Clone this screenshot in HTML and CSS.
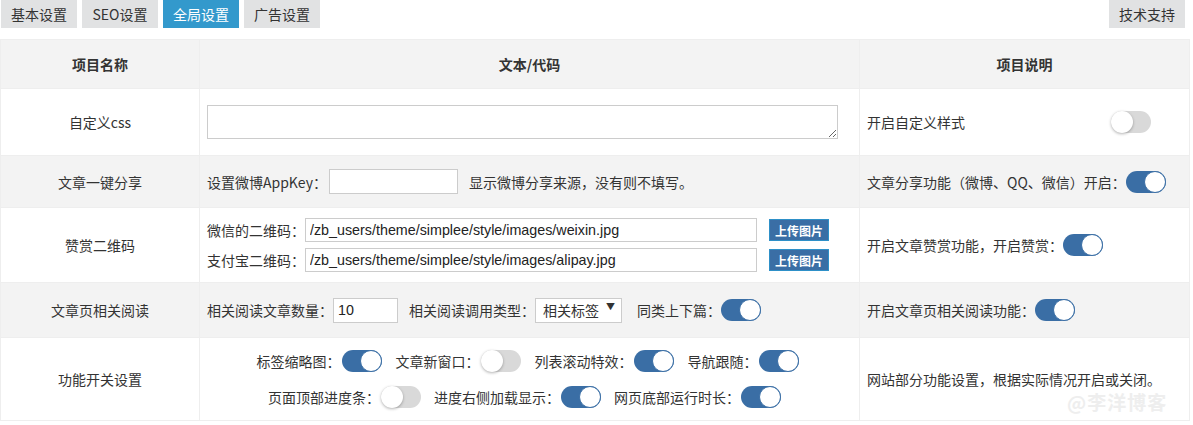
FILE: index.html
```html
<!DOCTYPE html>
<html lang="zh-CN">
<head>
    <meta charset="UTF-8">
    <title>全局设置</title>
    <link rel="stylesheet" href="styles.css">
</head>
<body>
<div class="tabs">
    <div class="tab_list">
        <span class="tab">基本设置</span>
        <span class="tab">SEO设置</span>
        <span class="tab tab_active">全局设置</span>
        <span class="tab">广告设置</span>
    </div>
    <span class="tab">技术支持</span>
</div>

<table class="einstellungen">
    <tr class="kopf">
        <th class="spalte1">项目名称</th>
        <th class="spalte2">文本/代码</th>
        <th class="spalte3">项目说明</th>
    </tr>
    <tr class="zeile1">
        <td class="name">自定义css</td>
        <td><textarea class="css_feld"></textarea></td>
        <td>
            <div class="info_zeile info_breit">
                <span>开启自定义样式</span>
                <span class="schalter"></span>
            </div>
        </td>
    </tr>
    <tr class="zeile2 grau">
        <td class="name">文章一键分享</td>
        <td>
            <div class="feld_zeile">
                <span>设置微博AppKey：</span>
                <input class="eingabe eingabe_key" type="text">
                <span class="hinweis">显示微博分享来源，没有则不填写。</span>
            </div>
        </td>
        <td>
            <div class="info_zeile">
                <span>文章分享功能（微博、QQ、微信）开启：</span>
                <span class="schalter an"></span>
            </div>
        </td>
    </tr>
    <tr class="zeile3">
        <td class="name">赞赏二维码</td>
        <td>
            <div class="feld_zeile bild_zeile">
                <span>微信的二维码：</span>
                <input class="eingabe eingabe_pfad" type="text" value="/zb_users/theme/simplee/style/images/weixin.jpg">
                <button class="hochladen">上传图片</button>
            </div>
            <div class="feld_zeile bild_zeile">
                <span>支付宝二维码：</span>
                <input class="eingabe eingabe_pfad" type="text" value="/zb_users/theme/simplee/style/images/alipay.jpg">
                <button class="hochladen">上传图片</button>
            </div>
        </td>
        <td>
            <div class="info_zeile">
                <span>开启文章赞赏功能，开启赞赏：</span>
                <span class="schalter an"></span>
            </div>
        </td>
    </tr>
    <tr class="zeile4 grau">
        <td class="name">文章页相关阅读</td>
        <td>
            <div class="feld_zeile">
                <span>相关阅读文章数量：</span>
                <input class="eingabe eingabe_zahl" type="text" value="10">
                <span class="abstand">相关阅读调用类型：</span>
                <span class="auswahl">相关标签<span class="pfeil">▼</span></span>
                <span class="abstand2">同类上下篇：</span>
                <span class="schalter an"></span>
            </div>
        </td>
        <td>
            <div class="info_zeile">
                <span>开启文章页相关阅读功能：</span>
                <span class="schalter an"></span>
            </div>
        </td>
    </tr>
    <tr class="zeile5">
        <td class="name">功能开关设置</td>
        <td>
            <div class="schalter_zeile">
                <span class="paar">标签缩略图：<span class="schalter an"></span></span>
                <span class="paar">文章新窗口：<span class="schalter"></span></span>
                <span class="paar">列表滚动特效：<span class="schalter an"></span></span>
                <span class="paar">导航跟随：<span class="schalter an"></span></span>
            </div>
            <div class="schalter_zeile zweite">
                <span class="paar">页面顶部进度条：<span class="schalter"></span></span>
                <span class="paar">进度右侧加载显示：<span class="schalter an"></span></span>
                <span class="paar">网页底部运行时长：<span class="schalter an"></span></span>
            </div>
        </td>
        <td class="info_text">网站部分功能设置，根据实际情况开启或关闭。</td>
    </tr>
</table>

<div class="wasserzeichen">@李洋博客</div>
</body>
</html>
```

FILE: styles.css
```css
/*grundlage*/
body{
    margin: 0;
    font-family: "Noto Sans CJK SC", sans-serif;
    font-size: 14px;
    color: #333;
    background-color: #fff;
}

/*tabs*/
.tabs{
    display: flex;
    justify-content: space-between;
    padding: 0 8px 0 1px;
    margin-bottom: 11px;
}
.tab_list{
    display: flex;
    gap: 5px;
}
.tab{
    display: block;
    width: 76px;
    height: 28px;
    line-height: 28px;
    text-align: center;
    background-color: #e1e2e3;
    color: #333;
}
.tab_active{
    background-color: #3399cc;
    color: #fff;
}

/*tabelle*/
.einstellungen{
    width: 1190px;
    border-collapse: collapse;
    table-layout: fixed;
}
.einstellungen th,
.einstellungen td{
    border: 1px solid #eeeeee;
    padding: 0 7px;
    vertical-align: middle;
}
.einstellungen th{
    font-weight: bold;
    text-align: center;
    background-color: #f3f3f3;
}
.spalte1{ width: 184px; }
.spalte2{ width: 645px; }
.spalte3{ width: 315px; }

.kopf{ height: 49px; }
.zeile1{ height: 67px; }
.zeile2{ height: 52px; }
.zeile3{ height: 75px; }
.zeile4{ height: 55px; }
.zeile5{ height: 83px; }

.grau td{
    background-color: #f3f3f3;
}
.name{
    text-align: center;
}

/*felder*/
.css_feld{
    display: block;
    width: 631px;
    height: 34px;
    margin: 0;
    padding: 2px;
    box-sizing: border-box;
    border: 1px solid #ccc;
    resize: vertical;
}
.feld_zeile{
    display: flex;
    align-items: center;
}
.bild_zeile{
    height: 30px;
}
.eingabe{
    box-sizing: border-box;
    border: 1px solid #ccc;
    background-color: #fff;
    font-family: "Liberation Sans", Arial, sans-serif;
    font-size: 14.3px;
    color: #222;
    padding: 0 4px;
    outline: none;
}
.eingabe_key{
    width: 129px;
    height: 25px;
    margin-left: 2px;
}
.hinweis{
    margin-left: 11px;
}
.eingabe_pfad{
    width: 452px;
    height: 24px;
}
.eingabe_zahl{
    width: 65px;
    height: 25px;
    margin-left: 0;
}
.hochladen{
    margin-left: 12px;
    width: 60px;
    height: 22px;
    padding: 0;
    border: 1px solid #2e90c8;
    background-color: #3a6ea5;
    color: #fff;
    font-family: "Noto Sans CJK SC", sans-serif;
    font-size: 12px;
    font-weight: bold;
}
.abstand{
    margin-left: 11px;
}
.abstand2{
    margin-left: 15px;
}
.auswahl{
    display: flex;
    justify-content: space-between;
    box-sizing: border-box;
    width: 87px;
    height: 25px;
    line-height: 23px;
    padding: 0 6px 0 7px;
    border: 1px solid #ccc;
    background-color: #fff;
}
.pfeil{
    font-size: 9px;
    line-height: 16px;
}

/*schalter*/
.schalter{
    position: relative;
    display: inline-block;
    width: 40px;
    height: 22px;
    border-radius: 11px;
    background-color: #d9d9d9;
    vertical-align: middle;
    flex-shrink: 0;
}
.schalter::after{
    content: "";
    position: absolute;
    left: 0;
    top: 0;
    width: 22px;
    height: 22px;
    border-radius: 50%;
    box-sizing: border-box;
    background-color: #fff;
    box-shadow: 0 1px 3px rgba(0, 0, 0, 0.3);
}
.schalter.an{
    background-color: #3a6ea5;
}
.schalter.an::after{
    left: 18px;
    border: 1px solid #3a6ea5;
    box-shadow: none;
}

.info_zeile{
    display: flex;
    align-items: center;
}
.info_breit{
    justify-content: space-between;
    padding-right: 31px;
}

.schalter_zeile{
    display: flex;
    justify-content: center;
    align-items: center;
    gap: 14px;
    height: 36px;
    padding-right: 4px;
}
.schalter_zeile.zweite{
    gap: 13px;
    padding-right: 10px;
}
.paar{
    display: flex;
    align-items: center;
    gap: 1px;
}
.info_text{
    white-space: nowrap;
    line-height: 14px;
}

.wasserzeichen{
    position: absolute;
    left: 1067px;
    top: 394px;
    font-size: 19px;
    line-height: 15px;
    font-weight: bold;
    color: #eeeeee;
    letter-spacing: 1px;
}
```
